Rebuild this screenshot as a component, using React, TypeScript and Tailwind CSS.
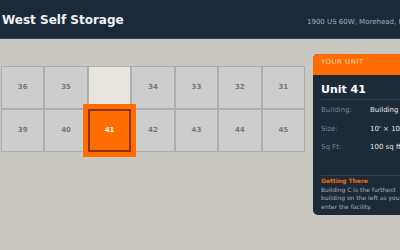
import React from "react";

const row1: (string | null)[] = ["36", "35", null, "34", "33", "32", "31"];
const row2: string[] = ["39", "40", "41", "42", "43", "44", "45"];

function Cell({ label, selected }: { label: string | null; selected?: boolean }) {
  if (selected) {
    return (
      <div className="relative z-10 h-[43px] flex items-center justify-center bg-[#ff6d00] border-2 border-[#8a3510] shadow-[0_0_0_5px_#ff6d00] text-[7px] font-bold text-white">
        {label}
      </div>
    );
  }
  if (label === null) {
    return <div className="h-[43px] bg-[#e8e4de] border border-[#b0b0ae]" />;
  }
  return (
    <div className="h-[43px] flex items-center justify-center bg-[#cdcdcd] border border-[#adadad] text-[7px] font-bold text-[#767676]">
      {label}
    </div>
  );
}

export default function App() {
  return (
    <div
      className="w-[400px] h-[250px] overflow-hidden bg-[#c8c7c0]"
      style={{ fontFamily: '"DejaVu Sans", sans-serif' }}
    >
      <header className="h-[39px] bg-[#1b2a3b] border-b border-[#354352] flex items-baseline pt-[13px]">
        <div className="w-[307px] shrink-0 pl-[2px] text-[12px] font-bold text-[#f2f2f2] leading-[14px]">
          West Self Storage
        </div>
        <div className="text-[7px] text-[#a3aebb] whitespace-nowrap">
          1900 US 60W, Morehead, KY 40351
        </div>
      </header>
      <main className="flex items-start gap-[8px]">
        <div className="mt-[27px] ml-[1px] w-[304px] shrink-0 grid grid-cols-7">
          {row1.map((l, i) => (
            <Cell key={"a" + i} label={l} />
          ))}
          {row2.map((l, i) => (
            <Cell key={"b" + i} label={l} selected={l === "41"} />
          ))}
        </div>
        <aside className="mt-[15px] w-[106px] shrink-0 rounded-[5px] overflow-hidden bg-[#1d2a38]">
          <div className="h-[21px] bg-[#ff6d00] pl-[8px] pt-[4px] text-[7px] leading-[9px] tracking-[0.5px] text-[#ffd0a6]">
            YOUR UNIT
          </div>
          <div className="px-[8px] pt-[8px] pb-[4px]">
            <div className="pb-[3px] border-b border-[#33404e] text-[11px] leading-[13px] font-bold text-white">
              Unit 41
            </div>
            <div className="pt-[1px] text-[7px]">
              <div className="flex items-center h-[18.5px]">
                <span className="w-[49px] shrink-0 text-[#7c8794]">Building:</span>
                <span className="text-[#e8e8e8] whitespace-nowrap">Building C</span>
              </div>
              <div className="flex items-center h-[18.5px]">
                <span className="w-[49px] shrink-0 text-[#7c8794]">Size:</span>
                <span className="text-[#e8e8e8] whitespace-nowrap">10' × 10'</span>
              </div>
              <div className="flex items-center h-[18.5px]">
                <span className="w-[49px] shrink-0 text-[#7c8794]">Sq Ft:</span>
                <span className="text-[#e8e8e8] whitespace-nowrap">100 sq ft</span>
              </div>
            </div>
            <div className="mt-[18px] border-t border-[#33404e] pt-[1.5px] text-[6px] leading-[8.5px]">
              <div className="font-bold text-[#f26a0f]">Getting There</div>
              <p className="text-[#a6afba]">
                Building C is the furthest building on the left as you enter the facility.
              </p>
            </div>
          </div>
        </aside>
      </main>
    </div>
  );
}
